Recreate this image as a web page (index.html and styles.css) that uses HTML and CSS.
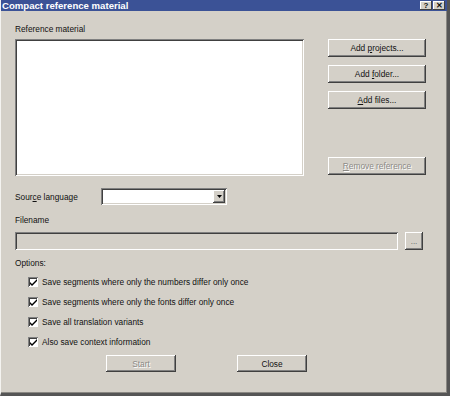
FILE: index.html
```html
<!DOCTYPE html>
<html lang="en">
<head>
  <meta charset="UTF-8" />
  <title>Compact reference material</title>
  <link rel="stylesheet" href="styles.css">
</head>
<body>
  <div class="window">
    <div class="titlebar">
      <span class="title">Compact reference material</span>
      <div class="caption-btns">
        <span class="cbtn">?</span>
        <span class="cbtn">&#x2715;</span>
      </div>
    </div>

    <div class="content">
      <div class="label first">Reference material</div>

      <div class="ref-row">
        <div class="listbox"></div>
        <div class="side-btns">
          <div class="btn wide"><span>Add <u>p</u>rojects...</span></div>
          <div class="btn wide"><span>Add <u>f</u>older...</span></div>
          <div class="btn wide"><span><u>A</u>dd files...</span></div>
          <div class="btn wide disabled remove"><span><u>R</u>emove reference</span></div>
        </div>
      </div>

      <div class="lang-row">
        <span class="lang-label">Sour<u>c</u>e language</span>
        <div class="combo">
          <span class="combo-arrow">
            <svg width="5" height="3" viewBox="0 0 5 3"><path d="M0 0h5L2.5 3z" fill="#000"/></svg>
          </span>
        </div>
      </div>

      <div class="label filename">Filename</div>
      <div class="file-row">
        <div class="field"></div>
        <div class="btn browse"><span>...</span></div>
      </div>

      <div class="label options">Options:</div>
      <div class="checks">
        <div class="check-row"><span class="checkbox"><svg width="7" height="7" viewBox="0 0 7 7"><path d="M0 3l2 2 5-5v2l-5 5-2-2z" fill="#000"/></svg></span><span>Save segments where only the numbers differ only once</span></div>
        <div class="check-row"><span class="checkbox"><svg width="7" height="7" viewBox="0 0 7 7"><path d="M0 3l2 2 5-5v2l-5 5-2-2z" fill="#000"/></svg></span><span>Save segments where only the fonts differ only once</span></div>
        <div class="check-row"><span class="checkbox"><svg width="7" height="7" viewBox="0 0 7 7"><path d="M0 3l2 2 5-5v2l-5 5-2-2z" fill="#000"/></svg></span><span>Save all translation variants</span></div>
        <div class="check-row"><span class="checkbox"><svg width="7" height="7" viewBox="0 0 7 7"><path d="M0 3l2 2 5-5v2l-5 5-2-2z" fill="#000"/></svg></span><span>Also save context information</span></div>
      </div>

      <div class="bottom-btns">
        <div class="btn action disabled"><span>Start</span></div>
        <div class="btn action"><span>Close</span></div>
      </div>
    </div>
  </div>
</body>
</html>
```

FILE: styles.css
```css
body {
  margin: 0;
  font-family: "Liberation Sans", Arial, sans-serif;
  font-size: 8.3px;
  color: #111;
  background: #d4d0c8;
}

.window {
  width: 450px;
  height: 396px;
  box-sizing: border-box;
  background: #d4d0c8;
  border-left: 1px solid #f4f3f0;
  border-right: 3px solid #555;
  border-bottom: 3px solid #555;
  box-shadow: inset -1px -1px #8a8883;
}

.titlebar {
  height: 11px;
  background: #3b5296;
  display: flex;
  align-items: center;
  justify-content: space-between;
  padding: 0 2px 0 1px;
}

.title {
  color: #fff;
  font-weight: bold;
  font-size: 9.6px;
  line-height: 11px;
}

.caption-btns {
  display: flex;
  gap: 1px;
}

.cbtn {
  width: 12px;
  height: 9px;
  background: #d4d0c8;
  box-shadow: inset -1px -1px #404040, inset 1px 1px #fff;
  font-size: 8px;
  font-weight: bold;
  line-height: 9px;
  text-align: center;
}

.content {
  padding-left: 14px;
}

.label {
  line-height: 13px;
}
.label.first { margin-top: 12px; }
.label.filename { margin-top: 9px; }
.label.options { margin-top: 7px; }

.ref-row {
  display: flex;
  margin-top: 3px;
}

.listbox {
  width: 289px;
  height: 137px;
  background: #fff;
  box-shadow: inset 1px 1px #808080, inset -1px -1px #fff, inset 2px 2px #404040, inset -2px -2px #d4d0c8;
}

.side-btns {
  display: flex;
  flex-direction: column;
  gap: 8px;
  margin-left: 24px;
}

.btn {
  height: 18px;
  box-sizing: border-box;
  display: flex;
  align-items: center;
  justify-content: center;
  background: #d4d0c8;
  box-shadow: inset -1px -1px #404040, inset 1px 1px #fff, inset -2px -2px #808080;
}

.btn.wide { width: 98px; }
.btn.remove { margin-top: 40px; }

.btn.disabled {
  color: #8c8a86;
  text-shadow: 1px 1px #fff;
}

.lang-row {
  display: flex;
  align-items: center;
  margin-top: 12px;
}

.lang-label {
  width: 86px;
}

.combo {
  width: 126px;
  height: 17px;
  box-sizing: border-box;
  background: #fff;
  box-shadow: inset 1px 1px #808080, inset -1px -1px #fff, inset 2px 2px #404040, inset -2px -2px #d4d0c8;
  display: flex;
  justify-content: flex-end;
  padding: 2px;
}

.combo-arrow {
  width: 12px;
  height: 13px;
  background: #d4d0c8;
  box-shadow: inset -1px -1px #404040, inset 1px 1px #fff, inset -2px -2px #808080;
  display: flex;
  align-items: center;
  justify-content: center;
}

.file-row {
  display: flex;
  margin-top: 5px;
}

.field {
  width: 383px;
  height: 18px;
  background: #d4d0c8;
  box-shadow: inset 1px 1px #808080, inset -1px -1px #fff, inset 2px 2px #404040, inset -2px -2px #d4d0c8;
}

.btn.browse {
  width: 18px;
  margin-left: 7px;
  font-size: 8px;
  color: #555;
}

.checks {
  display: flex;
  flex-direction: column;
  gap: 10px;
  margin-top: 7px;
  padding-left: 13px;
}

.check-row {
  display: flex;
  align-items: center;
  height: 10px;
}

.checkbox {
  width: 10px;
  height: 10px;
  box-sizing: border-box;
  background: #fff;
  box-shadow: inset 1px 1px #808080, inset -1px -1px #fff, inset 2px 2px #404040;
  display: flex;
  align-items: center;
  justify-content: center;
  margin-right: 4px;
  padding: 1px 0 0 1px;
}

.bottom-btns {
  display: flex;
  gap: 61px;
  margin-top: 8px;
  padding-left: 91px;
}

.btn.action {
  width: 70px;
  height: 17px;
}
```
